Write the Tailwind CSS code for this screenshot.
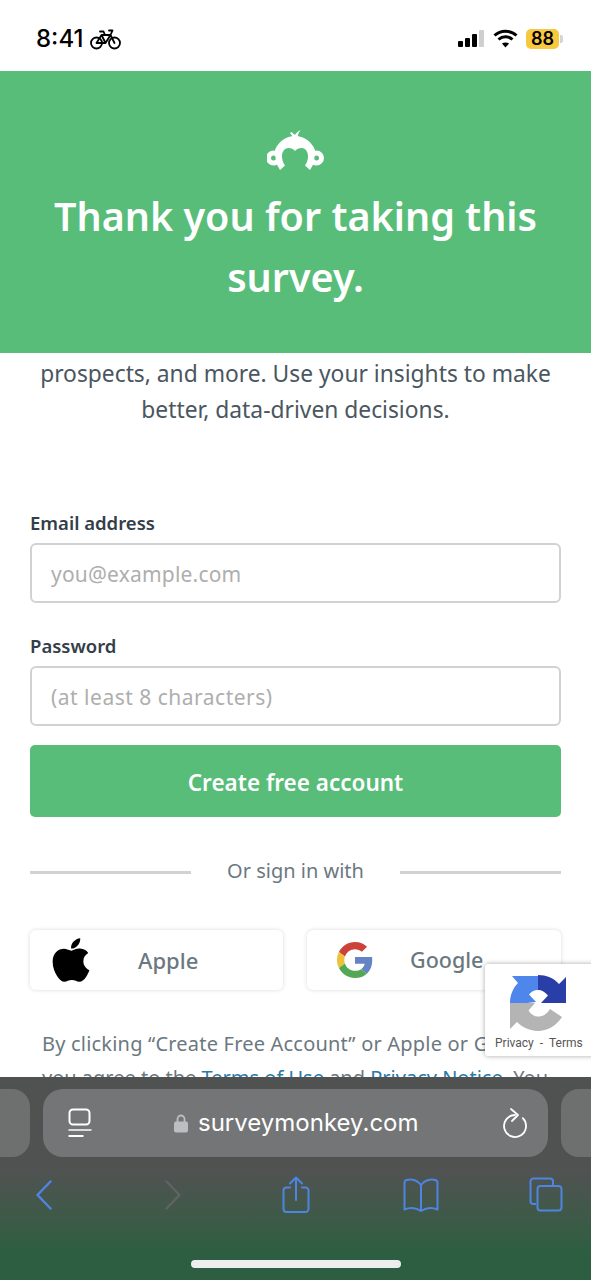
<!DOCTYPE html>
<html lang="en">
<head>
  <meta charset="UTF-8">
  <meta name="viewport" content="width=device-width, initial-scale=1.0">
  <title>Thank you | SurveyMonkey</title>
  <script src="https://cdn.jsdelivr.net/npm/@tailwindcss/browser@4"></script>
</head>
<body class="bg-white">
  <div class="relative w-[591px] h-[1280px] overflow-hidden font-['Noto_Sans',sans-serif]">
    <!-- Status bar -->
    <div class="h-[71px] pt-[6px] flex items-center pl-[36px] pr-[28px] font-['Inter',sans-serif] text-black">
      <span class="text-[24px] font-medium leading-none">8:41</span>
      <svg class="ml-[7px]" width="31" height="22" viewBox="0 0 31 22" fill="none" stroke="#000" stroke-width="1.8" stroke-linecap="round" stroke-linejoin="round">
        <circle cx="6.5" cy="15" r="5.5"/><circle cx="24.5" cy="15" r="5.5"/>
        <path d="M6.5 15l5-8h9l4 8M11.5 7l4 8h-9M15.5 15l5-8M10 3.5h3.5l1.500 3.500M19 2.500h3.500l-2 4.500"/>
      </svg>
      <div class="ml-auto flex items-center">
        <div class="flex items-end gap-[2px] h-[17px]">
          <div class="w-[5px] h-[6px] bg-black rounded-[1px]"></div>
          <div class="w-[5px] h-[9px] bg-black rounded-[1px]"></div>
          <div class="w-[5px] h-[13px] bg-black rounded-[1px]"></div>
          <div class="w-[5px] h-[17px] bg-[#cfcfcf] rounded-[1px]"></div>
        </div>
        <svg class="ml-[9px]" width="25" height="19" viewBox="0 0 25 19" fill="none" stroke="#000" stroke-width="3">
          <path d="M1.5 6.5C7.5 .8 17.5 .8 23.5 6.5"/><path d="M5.5 10.5c4-3.6 10-3.6 14 0"/><path d="M12.5 18.5l-3.6-4c2-1.5 5.200-1.500 7.200 0z" fill="#000" stroke="none"/>
        </svg>
        <div class="ml-[8px] w-[33px] h-[20px] bg-[#f8c93e] rounded-[5px] flex items-center justify-center text-[18px] font-semibold leading-none">88</div>
        <div class="w-[3px] h-[8px] ml-[1px] bg-[#d5d5d5] rounded-r-[2px]"></div>
      </div>
    </div>

    <!-- Green header -->
    <header class="h-[282px] bg-[#57bd78] flex flex-col items-center pt-[59px] text-white">
      <svg width="58" height="41" viewBox="0 0 58 41" fill="#fff">
        <path d="M26 7L23 3 24.500 2 28 5C29 3 31 1 33.700 0 32 2 31 4 30.500 7Z"/>
        <path d="M28 6C19 6 11 12 8 20L9 33 13 40 18 35.500C15.500 32 15 29 15 26 15 21.500 18 18 21.500 18 24 18 26.500 19 28 21 29.500 19 32 18 34.500 18 38 18 41 21.500 41 26 41 29 40.500 32 38 35.500L43 40 47 33 48 20C45 12 37 6 28 6Z"/>
        <path fill-rule="evenodd" d="M6.500 20.500a7.500 7.500 0 0 0 0 15c1.500 0 3-.5 4-1.500L11 22.500C10 21.500 8 20.500 6.500 20.500zm0 5a2.500 2.500 0 1 1 0 5 2.500 2.500 0 0 1 0-5z"/>
        <path fill-rule="evenodd" d="M49.500 20.500a7.500 7.500 0 0 1 0 15c-1.500 0-3-.5-4-1.500L45 22.500C46 21.500 48 20.500 49.500 20.500zm0 5a2.500 2.500 0 1 0 0 5 2.500 2.500 0 0 0 0-5z"/>
      </svg>
      <h1 class="mt-[15px] w-[520px] text-center text-[39.5px] leading-[61px] font-semibold">Thank you for taking this survey.</h1>
    </header>

    <main class="px-[30px]">
      <p class="pt-[3px] text-center text-[22.8px] leading-[36px] text-[#4a5660]">prospects, and more. Use your insights to make better, data-driven decisions.</p>

      <label class="block mt-[83px] text-[18.5px] leading-[24px] font-semibold text-[#333e48]">Email address</label>
      <div class="mt-[8px] h-[60px] pt-[4px] border-2 border-[#d0d2d3] rounded-[6px] flex items-center pl-[19px] text-[21px] tracking-[0.2px] text-[#aeaeae]">you@example.com</div>

      <label class="block mt-[31px] text-[18.5px] leading-[24px] font-semibold text-[#333e48]">Password</label>
      <div class="mt-[8px] h-[60px] pt-[4px] border-2 border-[#d0d2d3] rounded-[6px] flex items-center pl-[19px] text-[21px] tracking-[0.5px] text-[#aeaeae]">(at least 8 characters)</div>

      <button class="mt-[19px] w-full h-[72px] pt-[3px] bg-[#57bd78] rounded-[5px] text-white text-[22.5px] font-semibold">Create free account</button>

      <div class="mt-[40px] flex items-center justify-between h-[28px]">
        <div class="w-[161px] h-[3px] mt-[3px] bg-[#d0d2d3]"></div>
        <span class="text-[20px] text-[#6b787f]">Or sign in with</span>
        <div class="w-[161px] h-[3px] mt-[3px] bg-[#d0d2d3]"></div>
      </div>

      <div class="mt-[45px] flex justify-between">
        <div class="w-[253px] h-[60px] bg-white rounded-[6px] shadow-[0_0_4px_rgba(0,0,0,0.15)] flex items-center pl-[22px]">
          <svg width="38" height="50" viewBox="0 0 384 512" class="shrink-0"><path d="M318.7 268.7c-.2-36.700 16.400-64.400 50-84.800-18.800-26.900-47.200-41.700-84.700-44.600-35.500-2.800-74.300 20.700-88.500 20.700-15 0-49.400-19.700-76.400-19.700C63.300 141.200 4 184.800 4 273.500q0 39.300 14.400 81.200c12.800 36.700 59 126.700 107.200 125.200 25.200-.6 43-17.900 75.800-17.900 31.800 0 48.300 17.900 76.400 17.900 48.600-.7 90.400-82.500 102.600-119.300-65.200-30.700-61.700-90-61.700-91.900zm-56.600-164.200c27.300-32.400 24.800-61.900 24-72.500-24.100 1.400-52 16.400-67.900 34.900-17.500 19.800-27.800 44.300-25.600 71.900 26.100 2 49.900-11.400 69.500-34.300z"/></svg>
          <span class="ml-[48px] text-[22px] font-medium text-[#6b787f]">Apple</span>
        </div>
        <div class="w-[254px] h-[60px] bg-white rounded-[6px] shadow-[0_0_4px_rgba(0,0,0,0.15)] flex items-center pl-[30px]">
          <svg width="36" height="36" viewBox="0 0 48 48" class="shrink-0">
            <path fill="#cb4238" d="M24 9.500c3.540 0 6.710 1.220 9.210 3.600l6.850-6.850C35.900 2.380 30.470 0 24 0 14.620 0 6.510 5.380 2.560 13.220l7.980 6.190C12.430 13.720 17.740 9.500 24 9.500z"/>
            <path fill="#6484c4" d="M46.980 24.550c0-1.570-.15-3.090-.38-4.550H24v9.020h12.940c-.58 2.960-2.260 5.480-4.780 7.180l7.730 6c4.510-4.180 7.090-10.360 7.090-17.650z"/>
            <path fill="#ecc23c" d="M10.530 28.590c-.48-1.450-.76-2.990-.76-4.590s.27-3.140.76-4.590l-7.980-6.190C.92 16.460 0 20.120 0 24c0 3.880.92 7.540 2.560 10.780l7.970-6.190z"/>
            <path fill="#54a854" d="M24 48c6.480 0 11.930-2.130 15.890-5.810l-7.730-6c-2.150 1.450-4.920 2.300-8.160 2.300-6.260 0-11.570-4.220-13.470-9.910l-7.980 6.190C6.510 42.620 14.620 48 24 48z"/>
          </svg>
          <span class="ml-[37px] text-[21.5px] font-medium text-[#6b787f]">Google</span>
        </div>
      </div>

      <p class="mt-[37px] w-[560px] -ml-[15px] text-center text-[20px] leading-[34px] text-[#6b787f]"><span class="tracking-[0.2px]">By clicking “Create Free Account” or Apple or Google,</span><br>you agree to the <span class="text-[#2a7ba8]">Terms of Use</span> and <span class="text-[#2a7ba8]">Privacy Notice</span>. You</p>
    </main>

    <!-- reCAPTCHA badge -->
    <div class="absolute left-[485px] top-[964px] w-[120px] h-[92px] bg-white rounded-[3px] shadow-[0_0_5px_rgba(0,0,0,0.35)]">
      <svg class="absolute left-[24px] top-[10px]" width="58" height="58" viewBox="0 0 58 58">
        <path fill="#b4b4b4" d="M1 29H18L26 29 19.500 36.500C22 40.500 25.500 42.500 29 42.500 34 42.500 38 40 41 35L53 43C47 52 38 57 29 57 21 57 13.500 53.500 8 48L1 55Z"/>
        <path fill="#4f86ec" d="M1 29C1 21 4 14 9 9L3 2H29V16C25 16 22 18 20 20.500L27 28 18 29Z"/>
        <path fill="#2a3ea8" d="M29 1C37 1 45 4 50 10L57 3V29H32L39 21.500C36 18 33 16 29 16Z"/>
      </svg>
      <div class="absolute left-[10px] top-[71px] font-['Roboto',sans-serif] text-[12px] leading-[16px] text-[#555] whitespace-nowrap">Privacy&nbsp;&nbsp;-&nbsp;&nbsp;Terms</div>
    </div>

    <!-- Safari bottom bar -->
    <div class="absolute left-0 right-0 top-[1077px] h-[203px] bg-linear-to-b from-[#505252] from-45% to-[#2e5e41] to-85% font-['Inter',sans-serif]">
      <div class="flex justify-between mt-[12px] h-[68px]">
        <div class="w-[30px] bg-[#6e6f6f] rounded-r-[18px]"></div>
        <div class="w-[505px] bg-[#747576] rounded-[20px] flex items-center px-[24px] relative">
          <svg width="25" height="30" viewBox="0 0 25 30" fill="none" stroke="#fff" class="shrink-0">
            <rect x="2.500" y="1.500" width="20" height="15" rx="3.500" stroke-width="2"/>
            <path d="M1.500 22h23" stroke-width="1.500"/><path d="M1.500 28h15" stroke-width="2"/>
          </svg>
          <svg class="ml-[82px] shrink-0" width="14" height="19" viewBox="0 0 14 19">
            <path d="M3.500 8V5a3.500 3.500 0 0 1 7 0v3" fill="none" stroke="#bdbdc2" stroke-width="1.800"/>
            <rect y="7.500" width="14" height="11" rx="2" fill="#bdbdc2"/>
          </svg>
          <span class="ml-[10px] text-[24px] leading-none text-white">surveymonkey.com</span>
          <svg class="ml-auto -mr-[3px] shrink-0" width="24" height="30" viewBox="0 0 24 30" fill="none" stroke="#fff" stroke-width="1.800" stroke-linecap="round" stroke-linejoin="round">
            <path d="M12 7A11 11 0 1 0 19.800 10.200"/><path d="M8 1l7 6-6 6"/>
          </svg>
        </div>
        <div class="w-[30px] bg-[#6e6f6f] rounded-l-[18px]"></div>
      </div>
      <div class="flex items-center mt-[19px] h-[37px] pl-[36px]">
        <svg width="16" height="30" viewBox="0 0 16 30" fill="none" stroke="#4d85e0" stroke-width="2.500" stroke-linecap="round" stroke-linejoin="round"><path d="M14.500 1.500L1.500 15l13 13.500"/></svg>
        <svg class="ml-[113px]" width="16" height="30" viewBox="0 0 16 30" fill="none" stroke="#5f6463" stroke-width="2.500" stroke-linecap="round" stroke-linejoin="round"><path d="M1.500 1.500L14.500 15l-13 13.500"/></svg>
        <svg class="ml-[101px]" width="28" height="37" viewBox="0 0 28 37" fill="none" stroke="#4d85e0" stroke-width="2" stroke-linecap="round" stroke-linejoin="round"><path d="M8 11.500H4.500a3 3 0 0 0-3 3V33a3 3 0 0 0 3 3h19a3 3 0 0 0 3-3V14.500a3 3 0 0 0-3-3H20"/><path d="M14 24V1.500M8 7.500l6-6 6 6"/></svg>
        <svg class="ml-[93px]" width="36" height="34" viewBox="0 0 36 34" fill="none" stroke="#4d85e0" stroke-width="2" stroke-linecap="round" stroke-linejoin="round"><path d="M18 7C15 2.500 9 .5 3.500 2 2 2.500 1.500 3.500 1.500 5v26.500c6-2.500 12-1.500 16.500 1.500 4.500-3 10.500-4 16.500-1.500V5c0-1.500-.5-2.500-2-3C27 .5 21 2.500 18 7zM18 7v26"/></svg>
        <svg class="ml-[90px]" width="34" height="35" viewBox="0 0 34 35" fill="none" stroke="#4d85e0" stroke-width="2"><path d="M7 27H4.500a3 3 0 0 1-3-3V4.500a3 3 0 0 1 3-3H21a3 3 0 0 1 3 3V8"/><rect x="8.500" y="9" width="24" height="24.500" rx="3"/></svg>
      </div>
      <div class="absolute left-[191px] top-[183px] w-[210px] h-[8px] rounded-full bg-[#eeeeee]"></div>
    </div>
  </div>
</body>
</html>
